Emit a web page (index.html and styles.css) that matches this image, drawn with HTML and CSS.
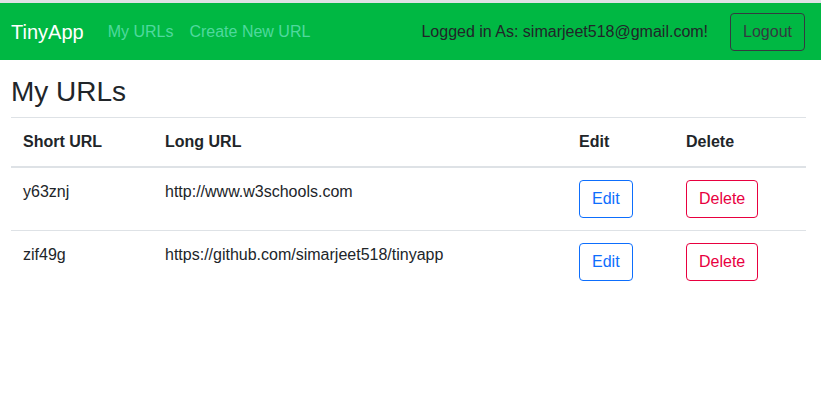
FILE: index.html
```html
<!DOCTYPE html>
<html lang="en">
<head>
<meta charset="utf-8">
<title>TinyApp</title>
<link rel="stylesheet" href="styles.css">
</head>
<body>
<nav class="navbar">
  <a class="brand" href="#">TinyApp</a>
  <div class="nav-links">
    <a class="nav-link" href="#">My URLs</a>
    <a class="nav-link" href="#">Create New URL</a>
  </div>
  <div class="nav-right">
    <span class="logged">Logged in As: simarjeet518@gmail.com!</span>
    <button class="btn btn-dark-outline">Logout</button>
  </div>
</nav>
<main class="main">
  <h3 class="title">My URLs</h3>
  <table class="table">
    <thead>
      <tr>
        <th class="c1">Short URL</th>
        <th class="c2">Long URL</th>
        <th class="c3">Edit</th>
        <th class="c4">Delete</th>
      </tr>
    </thead>
    <tbody>
      <tr>
        <td>y63znj</td>
        <td>http://www.w3schools.com</td>
        <td><button class="btn btn-primary-outline">Edit</button></td>
        <td><button class="btn btn-danger-outline">Delete</button></td>
      </tr>
      <tr>
        <td>zif49g</td>
        <td>https://github.com/simarjeet518/tinyapp</td>
        <td><button class="btn btn-primary-outline">Edit</button></td>
        <td><button class="btn btn-danger-outline">Delete</button></td>
      </tr>
    </tbody>
  </table>
</main>
</body>
</html>
```
FILE: styles.css
```css
* { box-sizing: border-box; }
html, body {
  margin: 0;
  padding: 0;
  background: #fff;
}
body {
  font-family: "Liberation Sans", Arial, sans-serif;
  font-size: 16px;
  line-height: 1.5;
  color: #212529;
  border-top: 3px solid #dee2e6;
}
.navbar {
  display: flex;
  align-items: center;
  background: #00b843;
  height: 57px;
  padding: 1px 16px 0 11px;
}
.brand {
  font-size: 20px;
  line-height: 30px;
  color: #fff;
  text-decoration: none;
  margin-right: 16px;
}
.nav-links { display: flex; }
.nav-link {
  color: #4fd89e;
  text-decoration: none;
  padding: 8px;
}
.nav-right {
  margin-left: auto;
  display: flex;
  align-items: center;
}
.logged {
  color: #212529;
  margin-right: 22px;
}
.btn {
  font-family: inherit;
  font-size: 16px;
  line-height: 24px;
  padding: 6px 12px;
  border: 1px solid;
  border-radius: 4px;
  background: transparent;
  cursor: pointer;
}
.btn-dark-outline { color: #343a40; border-color: #343a40; }
.btn-primary-outline { color: #0d6efd; border-color: #0d6efd; }
.btn-danger-outline { color: #e8003f; border-color: #e8003f; }
.main {
  padding: 0 15px 0 11px;
}
.title {
  font-size: 28px;
  font-weight: 500;
  line-height: 1.2;
  margin: 15px 0 8px;
}
.table {
  width: 100%;
  border-collapse: collapse;
}
.table th, .table td {
  text-align: left;
  padding: 12px;
  border-top: 1px solid #dee2e6;
  vertical-align: top;
}
.table thead th {
  vertical-align: bottom;
  border-bottom: 2px solid #dee2e6;
}
.c1 { width: 142px; }
.c2 { width: 414px; }
.c3 { width: 107px; }
.c4 { width: 132px; }
```
